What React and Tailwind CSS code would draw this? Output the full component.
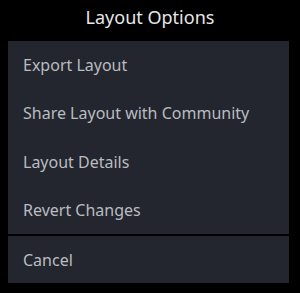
export default function App() {
  const items = ["Export Layout", "Share Layout with Community", "Layout Details", "Revert Changes"];
  return (
    <div className="w-[300px] h-[293px] bg-black flex flex-col" style={{ fontFamily: '"Noto Sans", sans-serif' }}>
      <div className="h-[41px] flex items-center justify-center text-[18px] text-[#e6e7e8] pb-[7px]">Layout Options</div>
      <div className="mx-[8px] w-[281px] bg-[#23262e] flex flex-col">
        {items.map((t) => (
          <div key={t} className="h-[48.25px] flex items-center pl-[15px] text-[16px] text-[#b9bcc0]">{t}</div>
        ))}
      </div>
      <div className="mx-[8px] w-[281px] mt-[2px] h-[47px] bg-[#23262e] flex items-center pl-[15px] text-[16px] text-[#b9bcc0]">Cancel</div>
    </div>
  );
}
